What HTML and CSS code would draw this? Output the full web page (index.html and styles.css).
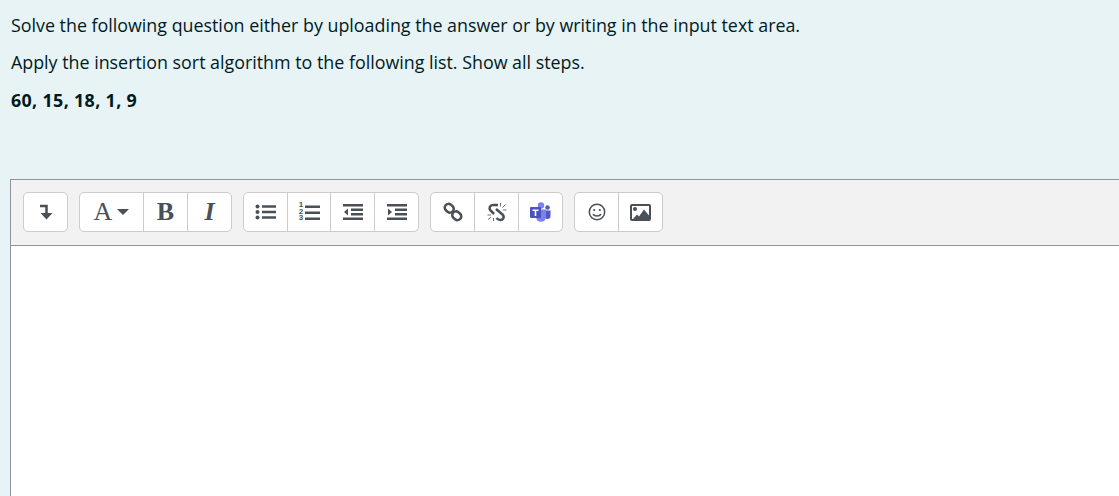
FILE: index.html
```html
<!DOCTYPE html>
<html lang="en">
<head>
    <meta charset="UTF-8">
    <title>Insertion sort question</title>
    <link rel="stylesheet" href="styles.css">
</head>
<body>
    <div class="question">
        <p>Solve the following question either by uploading the answer or by writing in the input text area.</p>
        <p>Apply the insertion sort algorithm to the following list. Show all steps.</p>
        <p class="list">60, 15, 18, 1, 9</p>
    </div>

    <div class="editor">
        <div class="toolbar">
            <div class="group">
                <button class="btn first">
                    <svg width="14" height="16" viewBox="0 0 14 16"><path d="M1 2h6.500v8" class="stroke"/><path d="M1.500 9h12L7.500 15.500z" class="fill"/></svg>
                </button>
            </div>
            <div class="group">
                <button class="btn wide"><span class="serif">A</span><span class="caret"></span></button>
                <button class="btn"><span class="serif bold">B</span></button>
                <button class="btn"><span class="serif italic">I</span></button>
            </div>
            <div class="group">
                <button class="btn">
                    <svg width="21" height="16" viewBox="0 0 21 16"><circle cx="2.500" cy="2.500" r="2" class="fill"/><circle cx="2.500" cy="8" r="2" class="fill"/><circle cx="2.500" cy="13.500" r="2" class="fill"/><path d="M7 1.200h14v2.600H7zM7 6.700h14v2.600H7zM7 12.200h14v2.600H7z" class="fill"/></svg>
                </button>
                <button class="btn narrow">
                    <span class="nums">1 2 3</span>
                    <svg width="15" height="15" viewBox="0 0 15 15"><path d="M0 .5h15v2.600H0zM0 6.500h15v2.600H0zM0 12.500h15v2.600H0z" class="fill"/></svg>
                </button>
                <button class="btn">
                    <svg width="20" height="16" viewBox="0 0 20 16"><path d="M0 0h20v2.500H0zM0 13.500h20V16H0zM8 4.500h12V7H8zM8 9h12v2.500H8zM5 4.500v7L1 8z" class="fill"/></svg>
                </button>
                <button class="btn">
                    <svg width="20" height="16" viewBox="0 0 20 16"><path d="M0 0h20v2.500H0zM0 13.500h20V16H0zM8 4.500h12V7H8zM8 9h12v2.500H8zM1 4.500v7L5 8z" class="fill"/></svg>
                </button>
            </div>
            <div class="group">
                <button class="btn">
                    <svg width="20" height="20" viewBox="0 0 20 20"><rect x="1.500" y="2.500" width="9.500" height="7.500" rx="3.750" transform="rotate(40 6.250 6.250)" class="stroke"/><rect x="9" y="10" width="9.500" height="7.500" rx="3.750" transform="rotate(40 13.750 13.750)" class="stroke"/></svg>
                </button>
                <button class="btn">
                    <svg width="20" height="20" viewBox="0 0 20 20"><path d="M11 3H6C3 3 1.500 6 3.500 8.500L7 12" class="stroke"/><path d="M9 7l6.500 5.500c2.500 2.500.500 5.500-2 5.500-1.500 0-3-.8-4-2" class="stroke"/><path d="M13.500 1v3.500M15.500 5.500l3-3M16 8h3.500M.5 13H4M4 15l-3 2.500M6.500 16v3" class="spark"/></svg>
                </button>
                <button class="btn">
                    <svg width="21" height="20" viewBox="0 0 21 20"><circle cx="11" cy="3.500" r="3.200" fill="#7b83eb"/><circle cx="17.500" cy="5.500" r="2.300" fill="#5059c9"/><path d="M14.500 8.500h6v5.500a3 3 0 0 1-6 0z" fill="#5059c9"/><path d="M6 7.500h10v7.500a5 4.800 0 0 1-10 0z" fill="#7b83eb"/><rect x="0" y="5" width="11" height="11" rx="1" fill="#4b53bc"/><path d="M2.500 7.500h6V9H6.300v5H4.700V9H2.500z" fill="#fff"/></svg>
                </button>
            </div>
            <div class="group">
                <button class="btn">
                    <svg width="18" height="18" viewBox="0 0 18 18"><circle cx="9" cy="9" r="7.700" class="stroke thin"/><circle cx="6.200" cy="7" r="1.100" class="fill"/><circle cx="11.800" cy="7" r="1.100" class="fill"/><path d="M5 11c1 2.500 7 2.500 8 0" class="stroke thin"/></svg>
                </button>
                <button class="btn">
                    <svg width="21" height="17" viewBox="0 0 21 17"><rect x="1" y="1" width="19" height="15" rx="1" class="stroke medium"/><circle cx="5" cy="5" r="2" class="fill"/><path d="M3 15l4-4.500 2 2 5-7 5 6v3.500z" class="fill"/></svg>
                </button>
            </div>
        </div>
        <div class="content"></div>
    </div>
</body>
</html>
```

FILE: styles.css
```css
html, body {
    margin: 0;
    padding: 0;
    height: 100%;
    overflow: hidden;
}
body {
    background-color: #e7f3f5;
    color: #001a1e;
    font-family: "Open Sans", "Noto Sans", sans-serif;
    font-size: 17.850px;
    display: flex;
    flex-direction: column;
}
.question {
    height: 179px;
    padding: 7px 11px 0;
    box-sizing: border-box;
}
.question p {
    margin: 0;
    height: 37px;
    line-height: 37px;
    white-space: nowrap;
}
.question .list {
    font-weight: 700;
    letter-spacing: 0.350px;
    margin-top: 1px;
}
.editor {
    flex: 1;
    margin-left: 10px;
    border-top: 1px solid #8f959e;
    border-left: 1px solid #8f959e;
    display: flex;
    flex-direction: column;
}
.toolbar {
    height: 66px;
    box-sizing: border-box;
    background-color: #f2f2f2;
    border-bottom: 1px solid #8f959e;
    display: flex;
    align-items: flex-start;
    gap: 11px;
    padding: 12px 0 0 12px;
}
.content {
    flex: 1;
    background-color: #fff;
}
.group {
    display: flex;
    height: 40px;
    box-sizing: border-box;
    background-color: #fff;
    border: 1px solid #ccc;
    border-radius: 5px;
}
.btn {
    width: 44px;
    padding: 0;
    border: none;
    border-left: 1px solid #ccc;
    background: none;
    display: flex;
    align-items: center;
    justify-content: center;
    color: #495057;
}
.btn:first-child {
    border-left: none;
    width: 43px;
}
.btn.narrow {
    width: 43px;
    gap: 1px;
}
.btn.wide:first-child {
    width: 63px;
    gap: 5px;
}
.serif {
    font-family: "Liberation Serif", serif;
    font-size: 26px;
    line-height: 1;
}
.bold {
    font-weight: 700;
}
.italic {
    font-weight: 700;
    font-style: italic;
}
.caret {
    width: 0;
    height: 0;
    border-left: 6px solid transparent;
    border-right: 6px solid transparent;
    border-top: 6px solid #495057;
}
.nums {
    width: 5px;
    font-family: "Liberation Sans", sans-serif;
    font-size: 8px;
    font-weight: 700;
    line-height: 6.500px;
    text-align: center;
}
.fill {
    fill: #495057;
}
.stroke {
    fill: none;
    stroke: #495057;
    stroke-width: 2.500;
}
.stroke.thin {
    stroke-width: 1.500;
}
.stroke.medium {
    stroke-width: 2;
}
.spark {
    fill: none;
    stroke: #6b7178;
    stroke-width: 1;
}
```
